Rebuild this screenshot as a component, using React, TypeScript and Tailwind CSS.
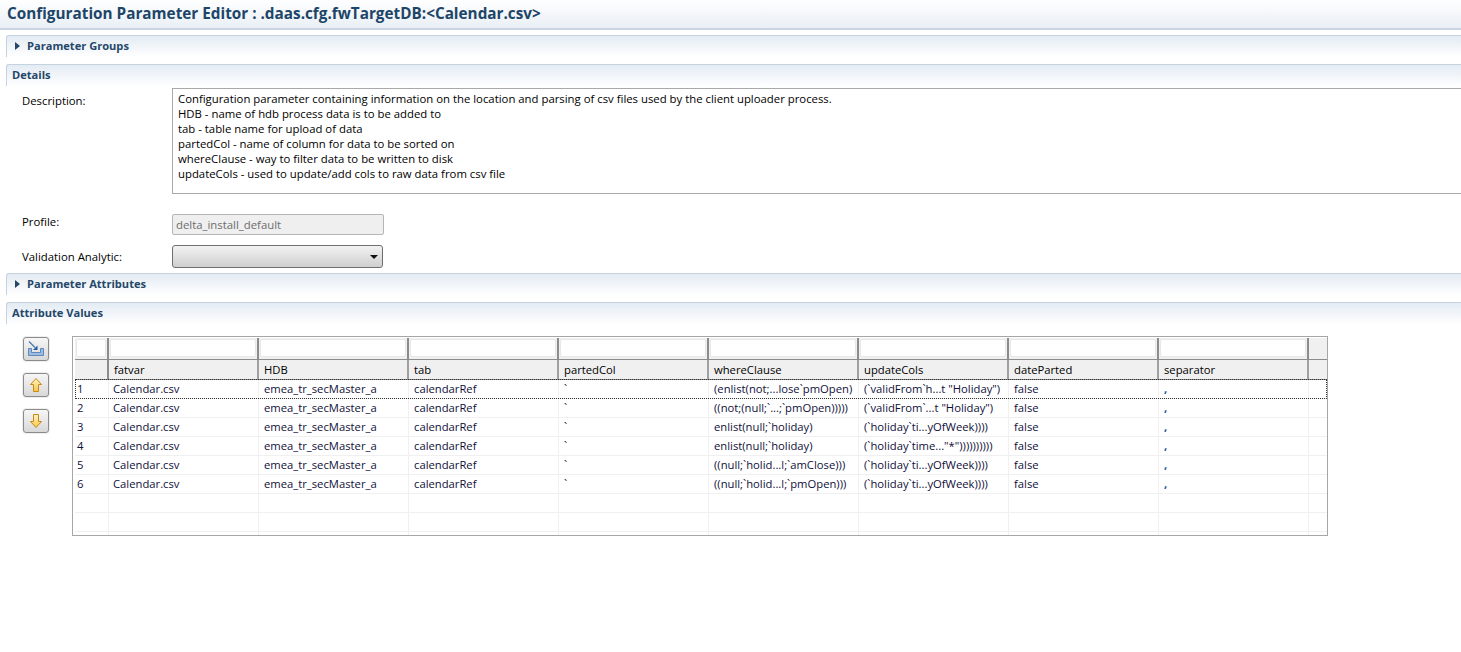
const font = { fontFamily: '"Open Sans", "Noto Sans", sans-serif' };

const columns = ["fatvar", "HDB", "tab", "partedCol", "whereClause", "updateCols", "dateParted", "separator"];

const rows = [
  ["1", "Calendar.csv", "emea_tr_secMaster_a", "calendarRef", "`", "(enlist(not;...lose`pmOpen)", '(`validFrom`h...t "Holiday")', "false", ","],
  ["2", "Calendar.csv", "emea_tr_secMaster_a", "calendarRef", "`", "((not;(null;`...;`pmOpen)))))", '(`validFrom`...t "Holiday")', "false", ","],
  ["3", "Calendar.csv", "emea_tr_secMaster_a", "calendarRef", "`", "enlist(null;`holiday)", "(`holiday`ti...yOfWeek))))", "false", ","],
  ["4", "Calendar.csv", "emea_tr_secMaster_a", "calendarRef", "`", "enlist(null;`holiday)", '(`holiday`time..."*"))))))))))', "false", ","],
  ["5", "Calendar.csv", "emea_tr_secMaster_a", "calendarRef", "`", "((null;`holid...l;`amClose)))", "(`holiday`ti...yOfWeek))))", "false", ","],
  ["6", "Calendar.csv", "emea_tr_secMaster_a", "calendarRef", "`", "((null;`holid...l;`pmOpen)))", "(`holiday`ti...yOfWeek))))", "false", ","],
  ["", "", "", "", "", "", "", "", ""],
  ["", "", "", "", "", "", "", "", ""],
];

const blanks = ["", "", "", "", "", "", "", "", ""];

const gridCols = "grid grid-cols-[34px_150px_150px_150px_150px_150px_150px_150px_150px_19px]";

function Section({ title, collapsed, className }: { title: string; collapsed?: boolean; className: string }) {
  return (
    <div className={`ml-[6px] h-[22px] pb-[1px] flex items-center rounded-tl-[3px] border-t border-l border-[#c5d3e0] bg-gradient-to-b from-[#e3ebf3] to-white text-[11.1px] font-bold text-[#25476a] ${className}`}>
      {collapsed ? (
        <>
          <svg width="5" height="8" viewBox="0 0 5 8" className="ml-[8px] mr-[7px]">
            <path d="M0 0 L5 4 L0 8 Z" fill="#25476a" />
          </svg>
          <span>{title}</span>
        </>
      ) : (
        <span className="ml-[5px]">{title}</span>
      )}
    </div>
  );
}

function SideButton({ children, className }: { children: React.ReactNode; className: string }) {
  return (
    <div className={`w-[26px] h-[24px] flex items-center justify-center rounded-[3px] border border-[#8c8c8c] ring-1 ring-[#eeeeee] bg-gradient-to-b from-[#f6f6f6] to-[#d8d8d8] ${className}`}>
      {children}
    </div>
  );
}

function ArrowIcon({ down }: { down?: boolean }) {
  const id = down ? "arrowDown" : "arrowUp";
  return (
    <svg width="14" height="16" viewBox="0 0 14 16">
      <defs>
        <linearGradient id={id} x1="0" y1="0" x2="0" y2="1">
          <stop offset="0" stopColor="#fff4c4" />
          <stop offset="1" stopColor="#f9c545" />
        </linearGradient>
      </defs>
      <path
        d={down ? "M4.5 1.5 H9.5 V8.5 H12.5 L7 14.5 L1.5 8.5 H4.5 Z" : "M7 1.5 L12.5 7.5 H9.5 V14.5 H4.5 V7.5 H1.5 Z"}
        fill={`url(#${id})`}
        stroke="#c98a14"
      />
    </svg>
  );
}

export default function App() {
  return (
    <div className="w-[1461px] h-[652px] overflow-hidden bg-white text-[11.35px] text-black" style={font}>
      <div className="h-[30px] flex items-center pl-[7px] pb-[1px] border-b-2 border-[#c9d5e2] bg-gradient-to-b from-white to-[#e9eff5] text-[15.3px] font-bold text-[#1d4568]">
        Configuration Parameter Editor : .daas.cfg.fwTargetDB:&lt;Calendar.csv&gt;
      </div>

      <Section title="Parameter Groups" collapsed className="mt-[5px]" />
      <Section title="Details" className="mt-[7px]" />

      <div className="flex mt-[2px] pl-[22px]">
        <div className="w-[150px] pt-[4px]">Description:</div>
        <div className="flex-1 h-[106px] border border-r-0 border-[#a9a9a9] pl-[5px] pt-[2px] leading-[15px] whitespace-nowrap">
          <div>Configuration parameter containing information on the location and parsing of csv files used by the client uploader process.</div>
          <div>HDB - name of hdb process data is to be added to</div>
          <div>tab - table name for upload of data</div>
          <div>partedCol - name of column for data to be sorted on</div>
          <div>whereClause - way to filter data to be written to disk</div>
          <div>updateCols - used to update/add cols to raw data from csv file</div>
        </div>
      </div>

      <div className="flex mt-[20px] pl-[22px]">
        <div className="w-[150px] -mt-[1px]">Profile:</div>
        <div className="w-[212px] h-[21px] flex items-center pl-[3px] pt-[1px] rounded-[2px] border border-[#b5b5b5] bg-[#efefef] text-[#6d6d6d]">delta_install_default</div>
      </div>

      <div className="flex items-center mt-[10px] pl-[22px]">
        <div className="w-[150px]">Validation Analytic:</div>
        <div className="w-[211px] h-[23px] flex items-center justify-end pr-[4px] rounded-[3px] border border-[#6f6f6f] bg-gradient-to-b from-[#f2f2f2] to-[#cfcfcf]">
          <svg width="8" height="4" viewBox="0 0 8 4">
            <path d="M0 0 H8 L4 4 Z" fill="#111" />
          </svg>
        </div>
      </div>

      <Section title="Parameter Attributes" collapsed className="mt-[5px]" />
      <Section title="Attribute Values" className="mt-[7px]" />

      <div className="flex mt-[12px] pl-[23px]">
        <div className="w-[49px] pt-[1px] flex flex-col">
          <SideButton className="">
            <svg width="20" height="18" viewBox="0 0 20 18">
              <path d="M2.5 8.5 H5.5 V12.5 H14.5 V8.5 H17.5 V15.5 H2.5 Z" fill="#9dbbe0" stroke="#5f88bb" />
              <path d="M3 1.5 L9 7.5" fill="none" stroke="#4a78b0" strokeWidth="1.2" />
              <path d="M11.5 10 V5.5 L7 10 Z" fill="#1f5c9e" />
            </svg>
          </SideButton>
          <SideButton className="mt-[12px]">
            <ArrowIcon />
          </SideButton>
          <SideButton className="mt-[12px]">
            <ArrowIcon down />
          </SideButton>
        </div>

        <div className="w-[1256px] h-[200px] overflow-hidden border border-[#a6a6a6] pl-[2px] pt-[1px] text-[11.25px]">
          <div className={`${gridCols} h-[21px] bg-[#f0f0f0]`}>
            {blanks.map((_, i) => (
              <div key={i} className="border-r-2 border-[#8c8c8c] p-[1px]">
                <div className="h-[18px] rounded-[2px] border border-[#e8e8e8] bg-white" />
              </div>
            ))}
            <div />
          </div>
          <div className={`${gridCols} h-[21px] bg-[#f0f0f0] border-t border-b border-[#8c8c8c]`}>
            <div className="border-r-2 border-[#8c8c8c]" />
            {columns.map((c) => (
              <div key={c} className="border-r-2 border-[#a0a0a0] pl-[5px] leading-[19px]">{c}</div>
            ))}
            <div />
          </div>
          <div className="relative">
            {rows.map((row, r) => (
              <div key={r} className={`${gridCols} h-[19px] border-b border-[#f0f0f0] text-[#10103a] leading-[18px]`}>
                {row.map((cell, c) => (
                  <div key={c} className={`border-r border-[#f0f0f0] whitespace-nowrap ${c === 0 ? "pl-[2px]" : c === 1 ? "pl-[4px]" : "pl-[5px]"} ${c === 8 ? "text-[#1f4f9a] font-bold" : ""}`}>{cell}</div>
                ))}
                <div />
              </div>
            ))}
            <div className={`${gridCols} h-[4px]`}>
              {blanks.map((_, i) => (
                <div key={i} className="border-r border-[#f0f0f0]" />
              ))}
              <div />
            </div>
            <div className="absolute left-0 -top-[1px] w-[1252px] h-[20px] border border-dotted border-[#333]" />
          </div>
        </div>
      </div>
    </div>
  );
}
